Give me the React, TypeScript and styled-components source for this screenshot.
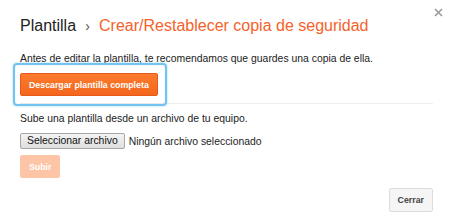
import styled, { createGlobalStyle } from 'styled-components';

const GlobalStyle = createGlobalStyle`
  html, body {
    margin: 0;
    padding: 0;
    background: #fff;
  }
  body {
    font-family: "Liberation Sans", Arial, sans-serif;
    color: #222;
  }
`;

export default function App() {
    return (
        <>
            <GlobalStyle />
            <Dialog>
                <CloseButton aria-label="Cerrar">
                    <svg width="9" height="9" viewBox="0 0 9 9">
                        <path d="M1 1 L8 8 M8 1 L1 8" stroke="#9a9a9a" strokeWidth="1.6" />
                    </svg>
                </CloseButton>
                <Title>
                    Plantilla<Separator>›</Separator><Current>Crear/Restablecer copia de seguridad</Current>
                </Title>
                <Text>Antes de editar la plantilla, te recomendamos que guardes una copia de ella.</Text>
                <BackupSection>
                    <FocusRing>
                        <PrimaryButton>Descargar plantilla completa</PrimaryButton>
                    </FocusRing>
                </BackupSection>
                <UploadSection>
                    <Text>Sube una plantilla desde un archivo de tu equipo.</Text>
                    <FileRow>
                        <FileButton>Seleccionar archivo</FileButton>
                        <FileName>Ningún archivo seleccionado</FileName>
                    </FileRow>
                    <PrimaryButton disabled>Subir</PrimaryButton>
                </UploadSection>
                <Footer>
                    <SecondaryButton>Cerrar</SecondaryButton>
                </Footer>
            </Dialog>
        </>
    );
}

const Dialog = styled.div`
  position: relative;
  width: 460px;
  height: 220px;
  box-sizing: border-box;
  padding: 15px 27px 0 20px;
  display: flex;
  flex-direction: column;
`;

const CloseButton = styled.button`
  position: absolute;
  top: 8px;
  right: 17px;
  border: 0;
  background: none;
  padding: 0;
  line-height: 0;
  cursor: pointer;
`;

const Title = styled.h1`
  margin: 0 0 15px;
  font-size: 16px;
  font-weight: normal;
  line-height: 22px;
  color: #222;
  white-space: nowrap;
`;

const Separator = styled.span`
  display: inline-block;
  color: #555;
  width: 23px;
  text-align: center;
  font-size: 14px;
`;

const Current = styled.span`
  color: #f5622a;
`;

const Text = styled.p`
  margin: 0;
  font-size: 10.4px;
  line-height: 13px;
  color: #222;
  white-space: nowrap;
`;

const BackupSection = styled.div`
  margin-top: 8px;
  padding-bottom: 7px;
  border-bottom: 1px solid #eeeeee;
`;

const FocusRing = styled.div`
  position: relative;
  display: inline-block;
  vertical-align: top;

  &::after {
    content: '';
    position: absolute;
    top: -10px;
    left: -7px;
    right: -9px;
    bottom: -10px;
    border: 2px solid #72c4f0;
    border-radius: 4px;
    box-shadow: 0 0 2px rgba(70, 170, 230, 0.6), inset 0 0 1px rgba(70, 170, 230, 0.5);
    pointer-events: none;
  }
`;

const PrimaryButton = styled.button`
  display: block;
  height: 23px;
  padding: 0 8px;
  border: 1px solid #e8581b;
  border-radius: 2px;
  background: linear-gradient(#fb7b2c, #f3661d);
  color: #fff;
  font-family: "Liberation Sans", Arial, sans-serif;
  font-size: 8.8px;
  font-weight: bold;
  cursor: pointer;
  align-self: flex-start;

  &:disabled {
    border-color: #fdc4a6;
    background: #fdc4a6;
    cursor: default;
  }
`;

const UploadSection = styled.div`
  display: flex;
  flex-direction: column;
  padding-top: 8px;
`;

const FileRow = styled.div`
  display: flex;
  align-items: center;
  gap: 4px;
  margin: 8px 0 6px;
`;

const FileButton = styled.button`
  height: 16px;
  padding: 0 6px;
  border: 1px solid #a7a7a7;
  border-radius: 2px;
  background: linear-gradient(#f4f4f4, #dedede);
  color: #111;
  font-family: "Liberation Sans", Arial, sans-serif;
  font-size: 10.4px;
  line-height: 14px;
`;

const FileName = styled.span`
  font-size: 10.4px;
  color: #222;
`;

const Footer = styled.div`
  margin-top: auto;
  padding-bottom: 8px;
  display: flex;
  justify-content: flex-end;
`;

const SecondaryButton = styled.button`
  height: 24px;
  padding: 0 8px;
  border: 1px solid #dcdcdc;
  border-radius: 2px;
  background: #f5f5f5;
  color: #444;
  font-family: "Liberation Sans", Arial, sans-serif;
  font-size: 8.8px;
  font-weight: bold;
  cursor: pointer;
`;
